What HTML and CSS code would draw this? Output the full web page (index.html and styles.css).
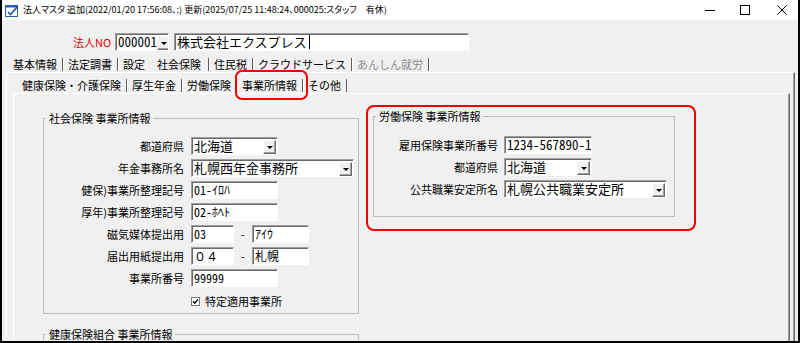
FILE: index.html
```html
<!DOCTYPE html>
<html lang="ja">
<head>
<meta charset="utf-8">
<title>法人マスタ</title>
<link rel="stylesheet" href="styles.css">
</head>
<body>
<div class="window">
  <div class="titlebar">
    <svg class="appicon" width="14" height="13" viewBox="0 0 14 13">
      <rect x="0.5" y="1.5" width="12" height="11" fill="#fff" stroke="#2a5fa8"/>
      <rect x="0.5" y="1.5" width="12" height="2" fill="#2a5fa8"/>
      <path d="M3 8 L5.5 10.5 L12.5 2.5" fill="none" stroke="#1d4f9a" stroke-width="1.6"/>
    </svg>
    <span class="title">法人マスタ 追加(2022/01/20 17:56:08、:) 更新(2025/07/25 11:48:24、000025:スタッフ　有休)</span>
    <div class="controls">
      <svg class="ctl ctl-min" width="10" height="10" viewBox="0 0 10 10"><path d="M0 5.5 H10" stroke="#000" stroke-width="1"/></svg>
      <svg class="ctl ctl-max" width="10" height="10" viewBox="0 0 10 10"><rect x="0.5" y="0.5" width="9" height="9" fill="none" stroke="#000"/></svg>
      <svg class="ctl ctl-close" width="10" height="10" viewBox="0 0 10 10"><path d="M0.5 0.5 L9.5 9.5 M9.5 0.5 L0.5 9.5" stroke="#000" stroke-width="1"/></svg>
    </div>
  </div>

  <div class="client">
    <div class="corp-row">
      <span class="corp-label">法人NO</span>
      <div class="combo corp-combo"><span class="val num">000001</span><span class="ddbtn"></span></div>
      <div class="textbox corp-name"><span class="val big">株式会社エクスプレス</span><span class="caret"></span></div>
    </div>

    <div class="tabs tabs-main">
      <span class="tab">基本情報</span>
      <span class="tab">法定調書</span>
      <span class="tab nosep">設定</span>
      <span class="tab active">社会保険</span>
      <span class="tab">住民税</span>
      <span class="tab">クラウドサービス</span>
      <span class="tab disabled">あんしん就労</span>
    </div>

    <div class="panel outer">
      <div class="tabs tabs-sub">
        <span class="tab">健康保険・介護保険</span>
        <span class="tab">厚生年金</span>
        <span class="tab nosep">労働保険</span>
        <span class="tab active marked">事業所情報</span>
        <span class="tab">その他</span>
      </div>

      <div class="panel inner">
        <div class="content">
          <div class="col-left">
            <fieldset class="group g-social">
              <legend>社会保険 事業所情報</legend>
              <div class="row">
                <span class="lbl">都道府県</span>
                <div class="combo w87"><span class="val big">北海道</span><span class="ddbtn"></span></div>
              </div>
              <div class="row">
                <span class="lbl">年金事務所名</span>
                <div class="combo w163"><span class="val big">札幌西年金事務所</span><span class="ddbtn"></span></div>
              </div>
              <div class="row">
                <span class="lbl">健保)事業所整理記号</span>
                <div class="textbox w87"><span class="val small">01-ｲﾛﾊ</span></div>
              </div>
              <div class="row">
                <span class="lbl">厚年)事業所整理記号</span>
                <div class="textbox w87"><span class="val small">02-ﾎﾍﾄ</span></div>
              </div>
              <div class="row">
                <span class="lbl">磁気媒体提出用</span>
                <div class="textbox w43"><span class="val small">03</span></div>
                <span class="dash">-</span>
                <div class="textbox w57"><span class="val small">ｱｲｳ</span></div>
              </div>
              <div class="row">
                <span class="lbl">届出用紙提出用</span>
                <div class="textbox w43"><span class="val wide">０４</span></div>
                <span class="dash">-</span>
                <div class="textbox w57"><span class="val wide">札幌</span></div>
              </div>
              <div class="row">
                <span class="lbl">事業所番号</span>
                <div class="textbox w87"><span class="val small">99999</span></div>
              </div>
              <div class="row check-row">
                <svg class="checkbox" width="9" height="9" viewBox="0 0 9 9">
                  <rect x="0.5" y="0.5" width="8" height="8" fill="#fff" stroke="#7a7a7a"/>
                  <path d="M2 4.2 L3.8 6.2 L7 2.3" fill="none" stroke="#000" stroke-width="1.3"/>
                </svg>
                <span class="check-text">特定適用事業所</span>
              </div>
            </fieldset>

            <fieldset class="group g-kenpo">
              <legend>健康保険組合 事業所情報</legend>
            </fieldset>
          </div>

          <div class="highlight">
            <fieldset class="group g-labor">
              <legend>労働保険 事業所情報</legend>
              <div class="row">
                <span class="lbl">雇用保険事業所番号</span>
                <div class="textbox w88"><span class="val num">1234-567890-1</span></div>
              </div>
              <div class="row">
                <span class="lbl">都道府県</span>
                <div class="combo w88"><span class="val big">北海道</span><span class="ddbtn"></span></div>
              </div>
              <div class="row">
                <span class="lbl">公共職業安定所名</span>
                <div class="combo w163"><span class="val big">札幌公共職業安定所</span><span class="ddbtn"></span></div>
              </div>
            </fieldset>
          </div>
        </div>
      </div>
    </div>
  </div>
</div>
</body>
</html>
```

FILE: styles.css
```css
* { box-sizing: border-box; }

html, body {
  margin: 0;
  padding: 0;
}

body {
  width: 800px;
  height: 343px;
  overflow: hidden;
  background: #fff;
  font-family: "Noto Sans CJK JP", "Noto Sans", sans-serif;
  font-size: 11px;
  color: #000;
}

.window {
  width: 800px;
  height: 343px;
  border: 2px solid #000;
  border-top: 0;
  background: #f0f0f0;
  display: flex;
  flex-direction: column;
  overflow: hidden;
}

/* ---------- title bar ---------- */
.titlebar {
  height: 20px;
  flex: none;
  background: #fff;
  display: flex;
  align-items: center;
}

.appicon {
  margin-left: 3px;
  flex: none;
}

.title {
  margin-left: 4px;
  font-size: 9px;
  line-height: 14px;
  white-space: pre;
  font-feature-settings: "palt";
}

.controls {
  margin-left: auto;
  display: flex;
  align-items: center;
  padding-right: 11px;
}

.ctl { display: block; }
.ctl-max { margin-left: 25px; }
.ctl-close { margin-left: 27px; }

/* ---------- client ---------- */
.client {
  flex: 1;
  display: flex;
  flex-direction: column;
  min-height: 0;
}

.corp-row {
  margin-top: 13px;
  height: 18px;
  flex: none;
  display: flex;
  align-items: center;
  padding-left: 71px;
}

.corp-label {
  width: 42px;
  flex: none;
  white-space: nowrap;
  color: #e00000;
  font-size: 11px;
  line-height: 14px;
}

.corp-combo { width: 54px; }

.corp-name {
  width: 295px;
  margin-left: 5px;
}

.caret {
  width: 1px;
  height: 14px;
  background: #000;
  margin-left: 2px;
  flex: none;
}

/* ---------- inputs ---------- */
.textbox,
.combo {
  height: 18px;
  background: #fff;
  border: 1px solid;
  border-color: #a0a0a0 #fff #fff #a0a0a0;
  box-shadow: inset 1px 1px 0 #696969;
  display: flex;
  align-items: center;
  padding-left: 2px;
  flex: none;
  overflow: hidden;
  white-space: nowrap;
}

.combo { padding-right: 1px; }

.val { line-height: 16px; }
.val.big { font-size: 13px; }
.val.num { font-size: 13px; font-feature-settings: "hwid"; }
.val.small { font-size: 12px; font-feature-settings: "hwid"; }
.val.wide { font-size: 12px; }

.ddbtn {
  margin-left: auto;
  margin-top: 1px;
  width: 13px;
  height: 14px;
  flex: none;
  background: #f0f0f0;
  border: 1px solid;
  border-color: #fff #696969 #696969 #fff;
  box-shadow: inset -1px -1px 0 #a0a0a0;
  display: flex;
  align-items: center;
  justify-content: center;
}

.ddbtn::after {
  content: "";
  border-left: 3px solid transparent;
  border-right: 3px solid transparent;
  border-top: 3px solid #000;
  margin-top: 1px;
}

.w43 { width: 43px; }
.w57 { width: 57px; }
.w87 { width: 87px; }
.w88 { width: 88px; }
.w163 { width: 163px; }

/* ---------- tabs ---------- */
.tabs {
  display: flex;
  align-items: center;
  flex: none;
}

.tabs-main {
  margin-top: 5px;
  height: 16px;
  padding-left: 6px;
}

.tabs-sub {
  height: 20px;
  padding-top: 4px;
  padding-left: 10px;
}

.tab {
  display: flex;
  align-items: center;
  flex: none;
  height: 16px;
  padding-left: 5px;
  line-height: 14px;
  white-space: nowrap;
  position: relative;
}

.tab::after {
  content: "";
  flex: none;
  width: 1px;
  height: 13px;
  margin-left: 5px;
  background: #5a5a5a;
  box-shadow: 1px 0 0 #fff;
}

.tab.nosep::after { display: none; }

.tabs-main .tab.active { margin-left: 7px; }
.tabs-main .tab.active::after { margin-left: 7px; }

.tabs-sub .tab.active { margin-left: 6px; }

.tab.disabled { color: #8c8c8c; }

.tab.marked::before {
  content: "";
  position: absolute;
  left: -2px;
  right: -5px;
  top: -7px;
  bottom: -7px;
  border: 2px solid #f00000;
  border-radius: 7px;
}

/* ---------- panels ---------- */
.panel {
  display: flex;
  flex-direction: column;
  flex: 1;
  min-height: 0;
  overflow: hidden;
}

.panel.outer {
  margin-left: 4px;
  margin-right: 3px;
  border-top: 1px solid #fff;
  border-left: 1px solid #fff;
  border-right: 1px solid #696969;
  box-shadow: inset -1px 0 0 #a0a0a0;
  overflow: visible;
}

.panel.inner {
  margin-left: 6px;
  margin-right: 4px;
  border-top: 1px solid #fff;
  border-left: 1px solid #fff;
  border-right: 1px solid #696969;
  box-shadow: inset -1px 0 0 #a0a0a0;
}

.content {
  display: flex;
  align-items: flex-start;
  gap: 7px;
  padding-top: 11px;
  padding-left: 29px;
}

/* ---------- group boxes ---------- */
.col-left {
  margin-top: 6px;
  width: 316px;
  display: flex;
  flex-direction: column;
  flex: none;
}

.group {
  margin: 0;
  padding: 12px 0 4px 0;
  border: 1px solid #bcbcbc;
  min-width: 0;
}

.group legend {
  margin-left: 2px;
  padding: 0 3px;
  font-size: 11px;
  line-height: 14px;
}

.g-kenpo {
  margin-top: 13px;
  height: 60px;
}

.row {
  display: flex;
  align-items: center;
  height: 18px;
}

.row + .row { margin-top: 4px; }

.lbl {
  text-align: right;
  line-height: 14px;
  white-space: nowrap;
  flex: none;
}

.g-social .lbl {
  width: 140px;
  margin-right: 7px;
}

.dash {
  width: 18px;
  flex: none;
  text-align: center;
  font-size: 11px;
}

.row.check-row {
  margin-top: 6px;
  height: 16px;
  padding-left: 147px;
}

.checkbox { flex: none; }

.check-text {
  margin-left: 5px;
  line-height: 14px;
}

/* ---------- highlighted labour box ---------- */
.highlight {
  width: 330px;
  flex: none;
  border: 2px solid #f00000;
  border-radius: 8px;
  padding: 2px 0 12px 5px;
}

.g-labor {
  width: 302px;
  padding-top: 13px;
  padding-bottom: 18px;
}

.g-labor .lbl {
  width: 124px;
  margin-right: 6px;
}
```
